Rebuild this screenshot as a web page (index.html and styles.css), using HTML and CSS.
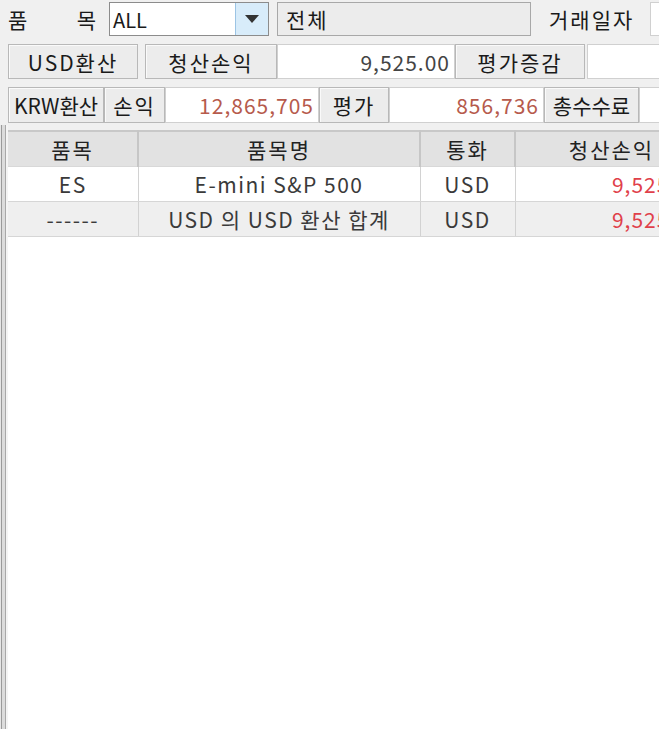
FILE: index.html
```html
<!DOCTYPE html>
<html><head><meta charset="utf-8"><title>해외선물 손익</title>
<link rel="stylesheet" href="styles.css">
</head>
<body>
<div id="screen">
  <div class="row row1">
    <span class="lbl spread"><span>품</span><span>목</span></span>
    <div class="combo">
      <span class="combotext">ALL</span>
      <span class="dropbtn"><svg width="14" height="8" viewBox="0 0 14 8"><path d="M0 0H14L7 8Z" fill="#333"/></svg></span>
    </div>
    <div class="rofield">전체</div>
    <span class="lbl datelbl">거래일자</span>
    <div class="field datefield">2</div>
  </div>

  <div class="row row2">
    <div class="cap w130">USD환산</div>
    <div class="cap w132 ml7">청산손익</div>
    <div class="field num w178">9,525.00</div>
    <div class="cap w130">평가증감</div>
    <div class="field w120 ml2"></div>
  </div>

  <div class="row row3">
    <div class="cap w96">KRW환산</div>
    <div class="cap w61">손익</div>
    <div class="field num red w154">12,865,705</div>
    <div class="cap w70">평가</div>
    <div class="field num red w155">856,736</div>
    <div class="cap w95">총수수료</div>
    <div class="field w120"></div>
  </div>

  <div class="gridwrap">
    <div class="splitter"></div>
    <table class="grid">
      <colgroup><col class="c1"><col class="c2"><col class="c3"><col class="c4"></colgroup>
      <thead>
        <tr><th>품목</th><th>품목명</th><th>통화</th><th>청산손익</th></tr>
      </thead>
      <tbody>
        <tr><td>ES</td><td>E-mini S&amp;P 500</td><td>USD</td><td class="amt">9,525.00</td></tr>
        <tr class="sum"><td>------</td><td>USD 의 USD 환산 합계</td><td>USD</td><td class="amt">9,525.00</td></tr>
      </tbody>
    </table>
  </div>
</div>
</body>
</html>
```

FILE: styles.css
```css
html, body {
	margin: 0; padding: 0;
	background: #f0f0f0;
	overflow: hidden;
}
body {
	font-family: "Noto Sans CJK KR", "Noto Sans", sans-serif;
	font-size: 21px; color: #1a1a1a; letter-spacing: 2px;
}
#screen { width: 760px; height: 729px; display: flex; flex-direction: column; }

.row { display: flex; align-items: stretch; flex-shrink: 0; }
.row1 { height: 34px; margin-top: 2px; padding-left: 8px; }
.row2 { height: 35px; margin-top: 8px; padding-left: 8px; }
.row3 { height: 36px; margin-top: 8px; padding-left: 8px; }

.lbl { display: flex; align-items: center; line-height: 1; }
.spread { width: 90px; justify-content: space-between; margin-right: 11px; }

.combo {
	width: 160px; display: flex; background: #fff;
	border: 1px solid #8c8c8c; box-sizing: border-box;
}
.combotext { flex: 1; padding-left: 3px; display: flex; align-items: center; font-size: 20px; letter-spacing: 0; }
.dropbtn {
	width: 32px; display: flex; align-items: center; justify-content: center;
	background: #d8ecfa; border-left: 1px solid #9cc4e4;
}

.rofield {
	width: 254px; margin-left: 8px; box-sizing: border-box;
	border: 1px solid #a8a8a8; background: #ececec;
	display: flex; align-items: center; padding-left: 8px;
}
.datelbl { margin-left: 18px; width: 101px; }
.datefield { width: 60px; padding-left: 3px; justify-content: flex-start; }

.cap {
	display: flex; align-items: center; justify-content: center; flex-shrink: 0;
	box-sizing: border-box; background: #ececec;
	border: 1px solid #b8b8b8; box-shadow: inset 1px 1px 0 #fafafa;
}
.field {
	display: flex; align-items: center; justify-content: flex-end; flex-shrink: 0;
	box-sizing: border-box; background: #fff;
	border: 1px solid #d0d0d0; padding-right: 4px;
}
.num { color: #444; letter-spacing: 1px; }
.red { color: #b65a4c; }

.w61 { width: 61px; } .w70 { width: 70px; } .w95 { width: 95px; } .w96 { width: 96px; }
.w120 { width: 120px; } .w130 { width: 130px; } .w132 { width: 132px; }
.w154 { width: 154px; } .w155 { width: 155px; } .w178 { width: 178px; }
.ml7 { margin-left: 7px; } .ml2 { margin-left: 2px; }
.cap.w96, .cap.w95 { letter-spacing: 0; }

.gridwrap { flex: 1; display: flex; margin-top: 7px; position: relative; }
.splitter {
	width: 8px; flex-shrink: 0; margin-top: -5px;
	background: linear-gradient(to right, #e6e6e6 0, #e6e6e6 1px, #9a9a9a 1px, #9a9a9a 2px, #dcdcdc 2px, #dcdcdc 5px, #a8a8a8 5px, #a8a8a8 6px, #f4f4f4 6px);
}
.grid {
	flex-shrink: 0; align-self: stretch;
	width: 700px; height: 100%;
	border-collapse: collapse; table-layout: fixed;
	background: #fff; border-top: 2px solid #c8c8c8;
	color: #3a3a3a;
}
.c1 { width: 130px; } .c2 { width: 282px; } .c3 { width: 95px; } .c4 { width: 193px; }
.grid th, .grid td { height: 34px; padding: 0 6px; text-align: center; white-space: nowrap; }
.grid th {
	font-weight: normal; background: #e2e2e2; color: #222;
	border-right: 2px solid #c6c6c6; border-bottom: 1px solid #d8d8d8;
}
.grid td { border-right: 1px solid #d2d2d2; border-bottom: 1px solid #d6d6d6; letter-spacing: 1.5px; }
.grid td.amt { text-align: right; color: #e0404a; letter-spacing: 1px; }
.grid tr.sum td { background: #efefef; }
.grid tbody::after { content: ""; display: table-row; height: 100%; }
```
